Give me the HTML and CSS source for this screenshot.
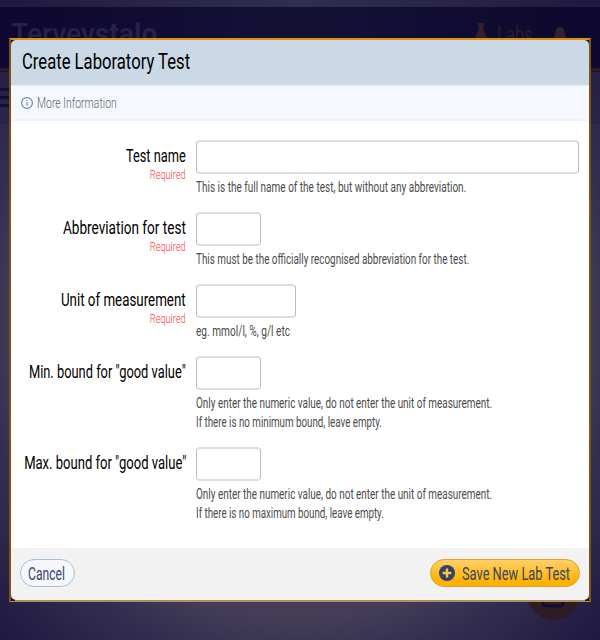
FILE: index.html
```html
<!DOCTYPE html>
<html lang="en">
<head>
<meta charset="utf-8">
<title>Create Laboratory Test</title>
<link rel="stylesheet" href="styles.css">
</head>
<body>
<div class="page" aria-hidden="true">
  <div class="strip"></div>
  <header class="topbar">
    <div class="logo"><span data-fit="146">Tervey<b>stalo</b></span></div>
    <nav class="topnav">
      <svg class="flask" viewBox="0 0 18 22"><path d="M5.500 0h7v2.500h-1v5l5 10q1 3-2 3h-11q-3 0-2-3l5-10v-5h-1z"/></svg>
      <span class="labs"><span data-fit="36">Labs</span></span>
      <svg class="bell" viewBox="0 0 18 22"><path d="M9 0q3.200 0 4.300 4l3.700 14H1L4.700 4Q5.800 0 9 0z"/></svg>
    </nav>
  </header>
  <div class="subbar"><i></i><i></i><i></i></div>
  <div class="fab"><svg viewBox="0 0 24 24"><path d="M2 8v10q0 3 3 3h14q3 0 3-3V8"/></svg></div>
</div>
<form class="modal">
  <h1 class="modal-title"><span data-fit="168">Create Laboratory Test</span></h1>
  <div class="more">
    <svg viewBox="0 0 12 12"><circle cx="6" cy="6" r="5.4"/><path d="M6 5.2v3.5M6 3v1.1"/></svg>
    <span data-fit="80">More Information</span>
  </div>
  <div class="fields">
    <div class="row">
      <div class="label"><label for="name"><span data-fit="60">Test name</span></label><small><span data-fit="36">Required</span></small></div>
      <div class="control"><input id="name" class="wide" type="text"><p><span data-fit="270">This is the full name of the test, but without any abbreviation.</span></p></div>
    </div>
    <div class="row">
      <div class="label"><label for="abbr"><span data-fit="123">Abbreviation for test</span></label><small><span data-fit="36">Required</span></small></div>
      <div class="control"><input id="abbr" type="text"><p><span data-fit="273">This must be the officially recognised abbreviation for the test.</span></p></div>
    </div>
    <div class="row">
      <div class="label"><label for="unit"><span data-fit="125">Unit of measurement</span></label><small><span data-fit="36">Required</span></small></div>
      <div class="control"><input id="unit" class="medium" type="text"><p><span data-fit="94">eg. mmol/l, %, g/l etc</span></p></div>
    </div>
    <div class="row tall">
      <div class="label"><label for="min"><span data-fit="157">Min. bound for "good value"</span></label></div>
      <div class="control"><input id="min" type="text"><p><span data-fit="296">Only enter the numeric value, do not enter the unit of measurement.</span></p><p><span data-fit="186">If there is no minimum bound, leave empty.</span></p></div>
    </div>
    <div class="row tall">
      <div class="label"><label for="max"><span data-fit="162">Max. bound for "good value"</span></label></div>
      <div class="control"><input id="max" type="text"><p><span data-fit="296">Only enter the numeric value, do not enter the unit of measurement.</span></p><p><span data-fit="188">If there is no maximum bound, leave empty.</span></p></div>
    </div>
  </div>
  <footer class="actions">
    <button class="cancel" type="button"><span data-fit="37">Cancel</span></button>
    <button class="save" type="button"><svg viewBox="0 0 16 16"><circle cx="8" cy="8" r="8"/><path d="M8 3.6v8.8M3.6 8h8.8"/></svg><span data-fit="108">Save New Lab Test</span></button>
  </footer>
</form>
<script src="fit.js"></script>
</body>
</html>
```
FILE: styles.css
```css
* { box-sizing: border-box; }
body {
  margin: 0;
  width: 600px;
  height: 640px;
  overflow: hidden;
  position: relative;
  font-family: Roboto, "Liberation Sans", sans-serif;
  background: radial-gradient(ellipse 430px 460px at 50% 50%, #4c465f 0%, #433d58 65%, #342f50 75%, #1e163f 100%);
}
[data-fit] { display: inline-block; white-space: nowrap; transform-origin: 0 50%; }

.page { width: 600px; height: 640px; }
.strip { height: 7px; background: linear-gradient(90deg, #211a40, #312e50 50%, #211a40); }
.topbar {
  height: 64px;
  display: flex;
  justify-content: space-between;
  border-bottom: 3px solid #2f1b27;
  box-shadow: 0 1px 0 #141033;
  background: linear-gradient(90deg, #0e072f, #131235 50%, #0e072f);
}
.logo { padding: 10px 0 0 11px; font-size: 29px; line-height: 34px; font-weight: 500; color: #272147; }
.logo b { font-weight: 700; }
.topnav { display: flex; align-items: flex-start; padding: 16px 31px 0 0; color: #2e1c2b; fill: #35202a; }
.topnav svg { width: 18px; height: 22px; }
.labs { width: 36px; margin: 0 18px 0 7px; font-size: 23px; line-height: 26px; }
.topnav .bell { margin-top: 4px; }
.subbar { height: 52px; padding-top: 17px; border-bottom: 1px solid #28213f; background: rgba(30, 22, 62, .25); }
.subbar i { display: block; width: 10px; height: 3px; margin-bottom: 5px; background: #120c36; }
.fab {
  position: absolute;
  left: 527px;
  top: 567px;
  width: 53px;
  height: 53px;
  border-radius: 50%;
  background: #2e1c24;
  padding: 18px 14px;
}
.fab svg { display: block; width: 24px; height: 24px; fill: none; stroke: #110b35; stroke-width: 3; }

.modal {
  position: absolute;
  z-index: 1;
  left: 11px;
  top: 40px;
  width: 578px;
  height: 560px;
  display: flex;
  flex-direction: column;
}
.modal::before {
  content: "";
  position: absolute;
  z-index: -1;
  inset: -2px;
  border: 2px solid #7e5311;
  border-top-color: #df930b;
  border-bottom: 1px solid #d18e1c;
  background: linear-gradient(#8e9095, #8e9095) bottom / calc(100% - 8px) 1px no-repeat, #18142f;
}
.modal-title {
  margin: 0;
  height: 45px;
  padding-left: 11px;
  border-radius: 5px 5px 0 0;
  background: #cbd8e5;
  font-size: 22px;
  line-height: 43px;
  font-weight: 400;
  color: #000;
}
.more {
  height: 36px;
  display: flex;
  align-items: center;
  gap: 4px;
  padding-left: 10px;
  border-top: 1px solid #e6ebf5;
  border-bottom: 2px solid #f0f2fa;
  background: #f5f9ff;
  font-size: 15px;
  line-height: 20px;
  font-weight: 300;
  color: #666;
}
.more svg { width: 12px; height: 12px; fill: none; stroke: #7783a8; stroke-width: 1.2; }
.fields { flex: 1; padding-top: 19px; background: #fff; }
.row { display: flex; gap: 10px; height: 72px; }
.row.tall { height: 91px; }
.label { width: 175px; display: flex; flex-direction: column; align-items: flex-end; text-align: right; }
.label [data-fit] { transform-origin: 100% 50%; }
.label label { height: 24px; padding-top: 4px; font-size: 19px; line-height: 24px; color: #000; }
.label small { padding-top: 3px; font-size: 13px; line-height: 16px; font-weight: 300; color: #ff3b3b; }
.control input {
  display: block;
  width: 65px;
  height: 34px;
  margin: 0 0 4px;
  border: 1px solid #bbb;
  border-top: 2px solid #dcdcdc;
  border-bottom: 2px solid #dcdcdc;
  border-radius: 4px;
  background: #fff;
}
.control .wide { width: 383px; }
.control .medium { width: 100px; }
.control p { margin: 0; height: 19px; font-size: 15.5px; line-height: 19px; color: #4c4c4c; }
.actions {
  height: 52px;
  display: flex;
  justify-content: space-between;
  align-items: flex-start;
  padding: 11px 9px 0;
  border-radius: 0 0 5px 5px;
  background: #f2f2f2;
}
.actions button {
  height: 28px;
  display: flex;
  align-items: center;
  border-radius: 14px;
  font: 400 19px/26px Roboto, sans-serif;
  color: #35466f;
}
.cancel { width: 55px; padding: 1px 0 0 7px; border: 1px solid #a9bdd6; background: #f5f7fa; }
.save { width: 150px; padding: 1px 0 0 8px; gap: 7px; border: 1px solid #dba32b; background: linear-gradient(#ffd068, #ffb300 80%); }
.save svg { flex: none; width: 16px; height: 16px; margin-top: -1px; fill: #33426d; }
.save path { stroke: #ffc641; stroke-width: 2.4; }
```
FILE: fit.js
```js
// Condense each text run horizontally to the width given in data-fit.
document.querySelectorAll("[data-fit]").forEach(function (el) {
  var target = Number(el.dataset.fit);
  var natural = el.offsetWidth;
  var right = getComputedStyle(el.parentElement).textAlign === "right";
  el.style.transform = "scaleX(" + target / natural + ")";
  el.style[right ? "marginLeft" : "marginRight"] = target - natural + "px";
});
```
